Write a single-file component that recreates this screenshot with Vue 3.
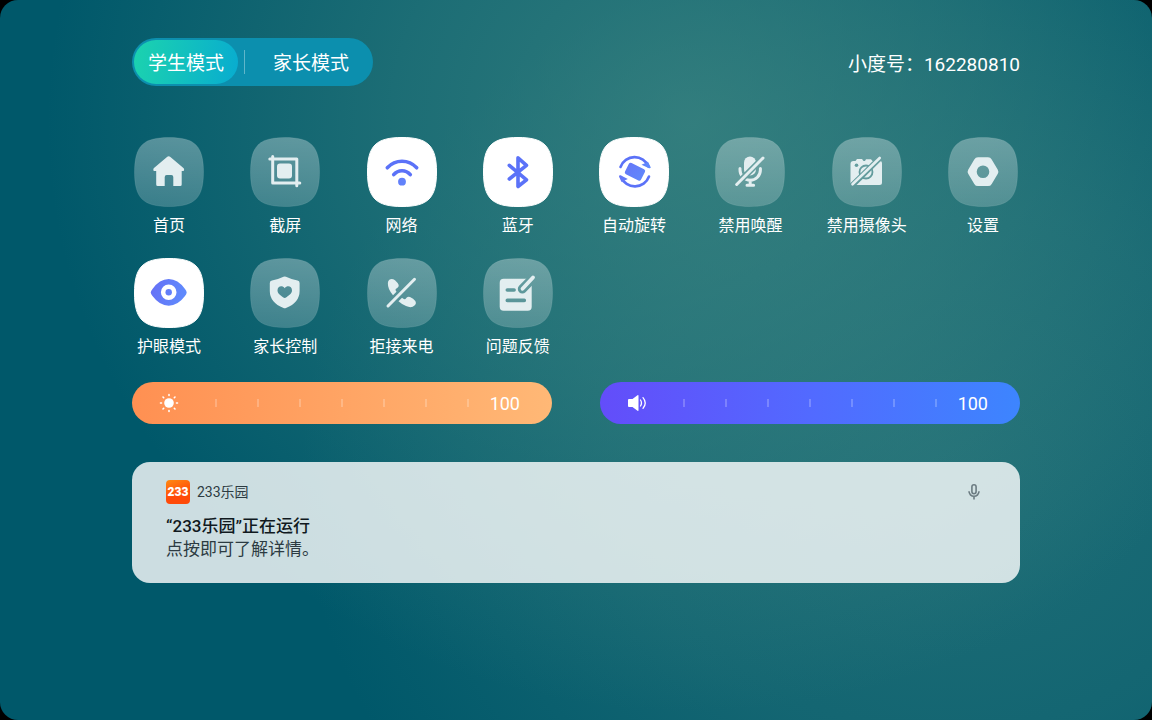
<template>
  <div class="screen">
    <header class="topbar">
      <div class="modes">
        <button class="mode" :class="{ active: mode === 'student' }" @click="mode = 'student'">学生模式</button>
        <span class="divider"></span>
        <button class="mode" :class="{ active: mode === 'parent' }" @click="mode = 'parent'">家长模式</button>
      </div>
      <p class="account">小度号：162280810</p>
    </header>

    <svg class="defs" aria-hidden="true">
      <defs>
        <linearGradient id="glass" x1="0" y1="0" x2="0" y2="1">
          <stop offset="0" stop-color="#fff" stop-opacity="0.32" />
          <stop offset="1" stop-color="#fff" stop-opacity="0.2" />
        </linearGradient>
        <linearGradient id="blue" gradientUnits="userSpaceOnUse" x1="18" y1="30" x2="52" y2="40">
          <stop offset="0" stop-color="#6672f6" />
          <stop offset="1" stop-color="#5f8cfd" />
        </linearGradient>
        <mask id="cut-slash">
          <rect width="70" height="70" fill="#fff" />
          <path d="M18 51 51 18" stroke="#000" stroke-width="6" />
        </mask>
        <mask id="cut-lens">
          <rect width="70" height="70" fill="#fff" />
          <circle cx="34" cy="35" r="6.5" fill="none" stroke="#000" stroke-width="1.8" />
          <circle cx="24.5" cy="28.3" r="1.8" fill="#000" />
          <path d="M18 50.5 51 18" stroke="#000" stroke-width="5.6" />
        </mask>
        <mask id="cut-pen">
          <rect width="70" height="70" fill="#fff" />
          <path d="M51 19 39.3 31" stroke="#000" stroke-width="9" stroke-linecap="round" />
          <path d="M24.3 32h6.8M24.3 42.4h17" stroke="#000" stroke-width="3.6" stroke-linecap="round" />
        </mask>
      </defs>
    </svg>

    <div class="tiles">
      <button v-for="tile in tiles" :key="tile.icon" class="tile" :class="{ on: tile.on }" @click="toggle(tile)">
        <svg class="icon" viewBox="0 0 70 70" aria-hidden="true">
          <path class="plate" d="M35 .5C61 .5 69.5 9 69.5 35S61 69.5 35 69.5.5 61 .5 35 9 .5 35 .5z" />
          <g v-if="tile.icon === 'home'" class="fill">
            <path d="M33 20Q34.700 18.500 36.400 20L49.700 31.200Q51 34 48.500 34H47.700V47.500Q47.700 49 46.200 49H39.300V40Q39.300 38 37.300 38H32.700Q30.700 38 30.700 40V49H23.700Q22.200 49 22.200 47.500V34H20.800Q18.500 34 19.700 31.200z" />
          </g>
          <g v-else-if="tile.icon === 'capture'" class="line">
            <path d="M19.800 22H46.800V48.700M22.700 19.500V46H49.800" />
            <rect class="fill flat" x="27" y="26.500" width="15" height="15" rx="3" />
          </g>
          <g v-else-if="tile.icon === 'wifi'" class="line wide">
            <path d="M20.300 30.800Q26.500 24.300 35 24.300T49.700 30.800" />
            <path d="M26.700 37.700Q30 33.700 35 33.700T43.300 37.700" />
            <circle class="fill flat" cx="35" cy="44.700" r="3.900" />
          </g>
          <g v-else-if="tile.icon === 'bluetooth'" class="line wide">
            <path d="M26.300 28.300 43.500 42.800 35 49.500V20.800L43.500 28.300 26.300 42" />
          </g>
          <g v-else-if="tile.icon === 'rotate'" class="line thin">
            <path d="M21.500 30A15 15 0 0 1 49.500 29.500" />
            <path d="M50 39.500A15 15 0 0 1 22 40" />
            <path class="fill flat" d="M42.500 27.800 49 24.800 51.800 30.500Q51.500 31.500 50 31.200zM28.800 42 22.500 45 20 39.500Q20 38 21.500 38.300z" />
            <rect class="fill flat" x="27" y="28.500" width="18" height="12.500" rx="2" transform="rotate(27 36 34.700)" />
          </g>
          <template v-else-if="tile.icon === 'mic'">
            <g class="line" mask="url(#cut-slash)">
              <rect class="fill flat" x="29" y="19.500" width="12" height="19" rx="6" />
              <path d="M25 31.500V33A10.200 10.200 0 0 0 45.400 33V31.500M35.200 43V48M32 48.300H38.600" />
            </g>
            <path class="line" d="M21.700 47.500 48 21" />
          </template>
          <template v-else-if="tile.icon === 'camera'">
            <path class="fill" mask="url(#cut-lens)" d="M21.500 24H23.500L25 22H30L31.500 24H33L34 22.200H39L40.500 24H48Q50 24 50 26V45.500Q50 48 47.500 48H21Q18.500 48 18.500 45.500V27Q18.500 24 21.500 24z" />
            <path class="line thin" d="M20.500 47.300 47.700 21" />
          </template>
          <g v-else-if="tile.icon === 'settings'" class="fill">
            <path fill-rule="evenodd" d="M30 20.300H40Q42.500 20.300 43.700 22.500L49.800 32.700Q50.900 34.700 49.800 36.700L43.700 46.900Q42.500 49.100 40 49.100H30Q27.500 49.100 26.300 46.900L20.200 36.700Q19.100 34.700 20.200 32.700L26.300 22.500Q27.500 20.300 30 20.300zM35 28.400A6.300 6.300 0 1 0 35 41A6.300 6.300 0 1 0 35 28.400z" />
          </g>
          <g v-else-if="tile.icon === 'eye'" class="fill">
            <path fill-rule="evenodd" d="M16.700 34.400Q17 32.600 18.500 31Q25.500 21 34.700 21T51 31Q52.500 32.600 52.700 34.400Q52.500 36.200 51 38Q43.800 47.700 34.700 47.700T18.500 38Q17 36.200 16.700 34.400zM34.700 26.500A7.800 7.800 0 1 0 34.700 42.100A7.800 7.800 0 1 0 34.700 26.500z" />
            <circle cx="34.700" cy="34.300" r="3.200" />
          </g>
          <g v-else-if="tile.icon === 'shield'" class="fill">
            <path fill-rule="evenodd" d="M33.500 18.800Q34.700 18.300 36 18.800Q41 21.300 47.500 22.500Q49.600 22.900 49.600 25V33Q49.600 44.500 36 50Q34.700 50.600 33.500 50Q19.800 44.500 19.800 33V25Q19.800 22.900 22 22.500Q28.500 21.300 33.500 18.800zM34.700 30.200C32.500 27.200 27.600 27.800 27.500 32.200C27.500 35.500 30.500 37.200 33 39.300Q34.700 40.800 36.400 39.300C39 37.200 42 35.500 42 32.200C41.900 27.800 36.900 27.200 34.700 30.200z" />
          </g>
          <template v-else-if="tile.icon === 'call'">
            <path class="fill" d="M22.300 21.700Q25 20 28 22.300Q30.500 24.500 31.700 27Q32 28.500 30.500 29.700Q28 31 28.500 32Q29 33 29.500 33.700L26 37.300Q23.500 34.500 22 31Q19.500 24 22.300 21.700zM31.500 43.200 35 39.800Q36.500 41 37.500 41.300Q38.300 41.500 39.500 39.800Q41 38 43 39Q46.500 40.500 48.300 43Q49.800 45.500 47.500 47.500Q44.500 50.500 39 48Q34.500 46 31.500 43.200z" />
            <path class="line" d="M21 48 47.500 21.300" />
          </template>
          <template v-else>
            <rect class="fill" mask="url(#cut-pen)" x="16.700" y="20.700" width="32" height="32" rx="4" />
            <path class="line pen" d="M50 19.500 39.500 30.800" />
          </template>
        </svg>
        <span class="label">{{ tile.label }}</span>
      </button>
    </div>

    <div class="sliders">
      <div class="slider brightness">
        <input type="range" min="0" max="100" aria-label="亮度" v-model="brightness" :style="{ backgroundSize: brightness + '% 100%' }">
        <div class="overlay">
          <svg class="glyph" viewBox="0 0 20 20" aria-hidden="true">
            <circle cx="10" cy="10" r="4.800" fill="#fff" />
            <path d="M10 1.500V2.500M10 17.500V18.500M1.500 10H2.500M17.500 10H18.500M4 4 4.700 4.700M15.300 15.300 16 16M4 16 4.700 15.300M15.300 4.700 16 4" stroke="#fff" stroke-width="1.600" stroke-linecap="round" />
          </svg>
          <div class="ticks"><i v-for="n in 7" :key="n"></i></div>
          <span class="value">{{ brightness }}</span>
        </div>
      </div>
      <div class="slider volume">
        <input type="range" min="0" max="100" aria-label="音量" v-model="volume" :style="{ backgroundSize: volume + '% 100%' }">
        <div class="overlay">
          <svg class="glyph" viewBox="0 0 20 20" aria-hidden="true">
            <path d="M2 6H5.500L10.500 2.200Q11.500 1.700 11.500 2.800V17.200Q11.500 18.300 10.500 17.800L5.500 14H2Q1 14 1 13V7Q1 6 2 6z" fill="#fff" />
            <path d="M13.500 7Q15.500 10 13.500 13M16 4.700Q20.500 10 16 15.300" fill="none" stroke="#fff" stroke-width="1.300" stroke-linecap="round" />
          </svg>
          <div class="ticks"><i v-for="n in 7" :key="n"></i></div>
          <span class="value">{{ volume }}</span>
        </div>
      </div>
    </div>

    <section class="notice">
      <div class="noticeHead">
        <span class="logo">233</span>
        <span class="appName">233乐园</span>
        <svg class="mic" viewBox="0 0 24 24" aria-hidden="true">
          <rect x="9.900" y="4.700" width="4.200" height="9" rx="2.100" />
          <path d="M7 11.300A5 5 0 0 0 17 11.300M12 16.300V19.500" />
        </svg>
      </div>
      <h2>“233乐园”正在运行</h2>
      <p>点按即可了解详情。</p>
    </section>
  </div>
</template>

<script setup>
import { ref } from "vue"

const mode = ref("student")
const brightness = ref(100)
const volume = ref(100)

const tiles = ref([
  { icon: "home", label: "首页", on: false },
  { icon: "capture", label: "截屏", on: false },
  { icon: "wifi", label: "网络", on: true },
  { icon: "bluetooth", label: "蓝牙", on: true },
  { icon: "rotate", label: "自动旋转", on: true },
  { icon: "mic", label: "禁用唤醒", on: false },
  { icon: "camera", label: "禁用摄像头", on: false },
  { icon: "settings", label: "设置", on: false },
  { icon: "eye", label: "护眼模式", on: true },
  { icon: "shield", label: "家长控制", on: false },
  { icon: "call", label: "拒接来电", on: false },
  { icon: "feedback", label: "问题反馈", on: false }
])

const toggle = (tile) => {
  tile.on = !tile.on
}
</script>

<style>
body {
  background: #000;
}
</style>

<style scoped>
.screen {
  box-sizing: border-box;
  min-height: 100vh;
  padding: 38px 132px;
  border-radius: 18px;
  background:
    radial-gradient(ellipse 56% 82% at 60% 17%, rgba(72, 142, 134, 0.66), rgba(72, 142, 134, 0.4) 45%, rgba(72, 142, 134, 0) 100%),
    radial-gradient(ellipse 56% 76% at 82% 66%, rgba(60, 130, 130, 0.5), rgba(60, 130, 130, 0.32) 50%, rgba(60, 130, 130, 0) 100%),
    #00586a;
  color: #fff;
  font-family: Roboto, "Noto Sans CJK SC", sans-serif;
}

button {
  padding: 0;
  border: 0;
  background: none;
  color: inherit;
  font-family: inherit;
  cursor: pointer;
}

.topbar {
  display: flex;
  justify-content: space-between;
  align-items: center;
}

.modes {
  display: flex;
  align-items: center;
  padding: 2px;
  border-radius: 24px;
  background: #0c8fae;
}

.mode {
  height: 44px;
  padding: 0 22px 2px;
  border-radius: 22px;
  font-size: 19px;
}

.mode.active {
  padding: 0 14px 2px;
  background: linear-gradient(100deg, #1cd3ae, #08acd0);
}

.divider {
  width: 1px;
  height: 24px;
  margin: 0 6px;
  background: rgba(255, 255, 255, 0.35);
}

.account {
  margin: 0;
  padding-top: 5px;
  font-size: 19px;
  line-height: 28px;
}

.defs {
  position: absolute;
  width: 0;
  height: 0;
}

.tiles {
  display: grid;
  grid-template-columns: repeat(8, 70px);
  justify-content: space-between;
  row-gap: 21px;
  margin-top: 51px;
  padding: 0 2px;
}

.tile {
  display: flex;
  flex-direction: column;
  align-items: center;
  gap: 8px;
}

.icon {
  width: 70px;
  height: 70px;
}

.plate {
  fill: url(#glass);
  stroke: rgba(255, 255, 255, 0.1);
}

.fill {
  fill: #e3eef0;
}

.line {
  fill: none;
  stroke: #e3eef0;
  stroke-width: 3;
  stroke-linecap: round;
  stroke-linejoin: round;
}

.line.thin {
  stroke-width: 2.6;
}

.line.wide {
  stroke-width: 3.6;
}

.line.pen {
  stroke-width: 3.8;
}

.line .flat {
  stroke: none;
}

.on .plate {
  fill: #fff;
  stroke: #fff;
}

.on .fill {
  fill: url(#blue);
}

.on .line {
  stroke: #5b72f8;
}

.label {
  font-size: 16px;
  line-height: 22px;
  white-space: nowrap;
}

.sliders {
  display: grid;
  grid-template-columns: 1fr 1fr;
  gap: 48px;
  margin-top: 24px;
}

.slider {
  position: relative;
  height: 42px;
}

.slider input {
  display: block;
  width: 100%;
  height: 100%;
  margin: 0;
  border-radius: 21px;
  background-color: rgba(255, 255, 255, 0.2);
  background-repeat: no-repeat;
  appearance: none;
}

.slider input::-webkit-slider-thumb {
  width: 42px;
  height: 42px;
  appearance: none;
}

.brightness input {
  background-image: linear-gradient(90deg, #ff9052, #ffb876);
}

.volume input {
  background-image: linear-gradient(90deg, #634dfa, #526aff 50%, #3d85fe);
}

.overlay {
  position: absolute;
  inset: 0;
  display: flex;
  align-items: center;
  padding: 0 32px 0 27px;
  pointer-events: none;
}

.glyph {
  width: 20px;
  height: 20px;
}

.ticks {
  display: flex;
  flex: 1;
  justify-content: space-between;
  margin: 0 21px 0 36px;
}

.ticks i {
  width: 2px;
  height: 8px;
  background: rgba(255, 255, 255, 0.22);
}

.value {
  font-size: 18px;
}

.notice {
  margin-top: 38px;
  padding: 18px 34px 22px;
  border-radius: 18px;
  background: rgba(255, 255, 255, 0.8);
  color: #2c3b42;
}

.noticeHead {
  display: flex;
  align-items: center;
  margin-bottom: 11px;
}

.logo {
  width: 24px;
  border-radius: 4px;
  background: linear-gradient(160deg, #ff8a12, #ff4a08 60%);
  color: #fff;
  font-size: 12px;
  font-weight: 900;
  line-height: 24px;
  text-align: center;
}

.appName {
  margin-left: 7px;
  font-size: 14px;
  line-height: 24px;
}

.mic {
  width: 24px;
  height: 24px;
  margin-left: auto;
  fill: none;
  stroke: #6c7c82;
  stroke-width: 1.6;
}

.notice h2,
.notice p {
  margin: 0;
  font-size: 17px;
  font-weight: 400;
  line-height: 23px;
}

.notice h2 {
  color: #10191e;
  font-weight: 500;
}
</style>
